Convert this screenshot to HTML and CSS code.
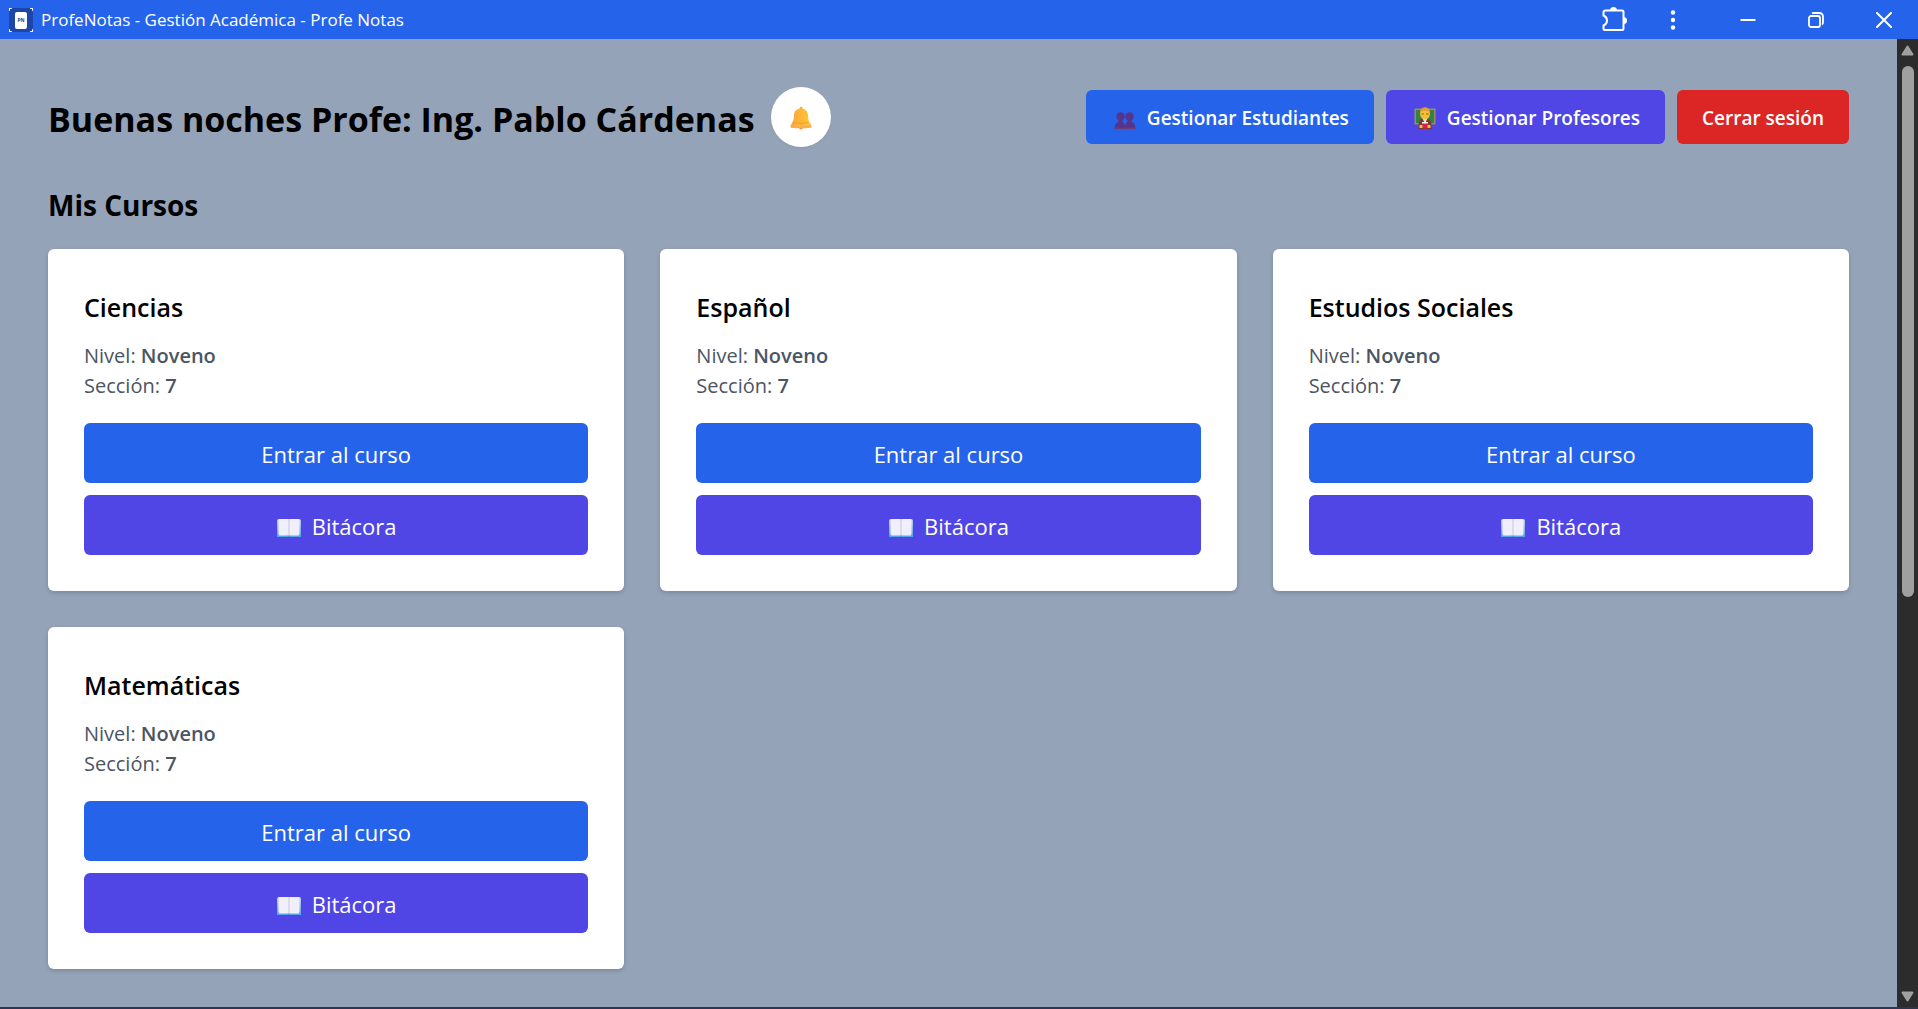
FILE: index.html
```html
<!DOCTYPE html>
<html lang="es">
<head>
<meta charset="utf-8">
<meta name="viewport" content="width=device-width, initial-scale=1">
<title>ProfeNotas - Gestión Académica - Profe Notas</title>
<link rel="stylesheet" href="styles.css">
</head>
<body>
<svg class="defs" width="0" height="0" aria-hidden="true">
  <defs>
    <linearGradient id="book-edge" x1="0" y1="0" x2="0" y2="1">
      <stop offset="0" stop-color="#c9cff5"/><stop offset="1" stop-color="#4b9fe8"/>
    </linearGradient>
    <linearGradient id="bell-body" x1="0" y1="0" x2="1" y2="0">
      <stop offset="0" stop-color="#fba53c"/><stop offset="0.6" stop-color="#fdbb35"/><stop offset="1" stop-color="#fcc93a"/>
    </linearGradient>
    <symbol id="book" viewBox="0 0 26 20">
      <path d="M1 3Q1 1 3 1H23Q25 1 25 3V19H14.500L13 20L11.500 19H1Z" fill="url(#book-edge)"/>
      <path d="M2.500 2Q2.500 1 4 1H11.500Q13 1 13 2.500V17H4Q2.500 17 2.500 16Z" fill="#f0effa"/>
      <path d="M13 2.500Q13 1 14.500 1H22Q23.500 1 23.500 2V16Q23.500 17 22 17H13Z" fill="#f0effa"/>
      <path d="M13 2V18" stroke="#cbc5de" stroke-width="1"/>
      <path d="M3 17.500H11.500L13 18.500L14.500 17.500H23" fill="none" stroke="#a9cdf2" stroke-width="1"/>
      <path d="M12 18.500H14V20H12Z" fill="#2668a5"/>
    </symbol>
  </defs>
</svg>

<header class="titlebar">
  <svg class="app-icon" viewBox="0 0 24 24" aria-hidden="true">
    <rect width="24" height="24" fill="#1e46a8"/>
    <path d="M0 0H3Q0 0 0 3ZM24 0H21Q24 0 24 3ZM0 24V21Q0 24 3 24ZM24 24V21Q24 24 21 24Z" fill="#fff" stroke="#fff"/>
    <rect x="6" y="4" width="12" height="17" rx="2" fill="#fff"/>
    <text x="12" y="14" text-anchor="middle" class="app-icon-text">PN</text>
  </svg>
  <span class="titlebar-text">ProfeNotas - Gestión Académica - Profe Notas</span>
  <div class="titlebar-actions">
    <button class="tb-button tb-wide" type="button" aria-label="Extensiones">
      <svg width="28" height="28" viewBox="0 0 28 28"><path d="M4.500 4.500H21Q22.500 4.500 22.500 6V22.500Q22.500 24 21 24H4Q2.500 24 2.500 22.500V19.500Q6 18 6 14.500Q6 11 2.500 9.500V6.500Q2.500 4.500 4.500 4.500Z" fill="none" stroke="#fff" stroke-width="2"/><path d="M9 4.500A3.500 3.500 0 0 1 16 4.500ZM22.500 11A3.500 3.500 0 0 1 22.500 18Z" fill="#fff"/></svg>
    </button>
    <button class="tb-button tb-menu" type="button" aria-label="Menú">
      <svg width="6" height="22" viewBox="0 0 6 22"><g fill="#fff"><circle cx="3" cy="3.500" r="2.200"/><circle cx="3" cy="11" r="2.200"/><circle cx="3" cy="18.500" r="2.200"/></g></svg>
    </button>
    <button class="tb-button" type="button" aria-label="Minimizar">
      <svg width="16" height="16" viewBox="0 0 16 16"><path d="M.5 8H15.500" stroke="#fff" stroke-width="2"/></svg>
    </button>
    <button class="tb-button" type="button" aria-label="Restaurar">
      <svg width="16" height="16" viewBox="0 0 16 16" fill="none" stroke="#fff" stroke-width="1.800"><rect x="1" y="4" width="11" height="11" rx="2"/><path d="M4 1.500Q4.500 1 6 1H11Q15 1 15 5V10Q15 12 14 12.500"/></svg>
    </button>
    <button class="tb-button" type="button" aria-label="Cerrar">
      <svg width="16" height="16" viewBox="0 0 16 16"><path d="M1 1L15 15M15 1L1 15" stroke="#fff" stroke-width="2" stroke-linecap="round"/></svg>
    </button>
  </div>
</header>

<div class="viewport">
  <main class="page">
    <div class="page-header">
      <div class="greeting">
        <h1>Buenas noches Profe: Ing. Pablo Cárdenas</h1>
        <button class="bell" type="button" aria-label="Notificaciones">
          <svg width="22" height="24" viewBox="0 0 24 26"><circle cx="12" cy="2.500" r="1.700" fill="#f8a53c"/><circle cx="12" cy="23.500" r="2" fill="#f08a4b"/><path d="M12 2.500C7 2.500 4.500 6 4.300 10C4.100 15 3.500 17 1.500 19.500Q.5 21 .8 23Q12 24.500 23.200 23Q23.500 21 22.500 19.500C20.500 17 19.900 15 19.700 10C19.500 6 17 2.500 12 2.500Z" fill="url(#bell-body)"/><path d="M.8 20.500Q12 22.500 23.200 20.500V23.500Q12 25 .8 23.500Z" fill="#f9ad4d"/><path d="M3.500 18Q12 20 20.500 18" stroke="#ef9a2d" fill="none"/></svg>
        </button>
      </div>
      <nav class="actions">
        <button class="btn btn-blue" type="button">
          <svg width="25" height="22" viewBox="-3 -5 25 22" fill="#56348a"><circle cx="6.500" cy="4.500" r="4.200"/><circle cx="15.500" cy="4.500" r="4.200"/><path d="M4.500 8H8.500V10Q11.500 11 11.500 17H.5Q.5 11 4.500 10Z"/><path d="M13.500 8H17.500V10Q21.500 11 21.500 17H11Q11 11 13.500 10Z"/><path d="M1 16.300H21" stroke="#713a74" stroke-width="1.400"/></svg>
          Gestionar Estudiantes
        </button>
        <button class="btn btn-indigo" type="button">
          <svg width="25" height="22" viewBox="-3 0 25 22"><rect x=".5" y="1.500" width="21" height="16" fill="#9b8a68"/><rect x="2" y="3" width="18" height="13" fill="#34823f"/><path d="M4.500 22Q4 12 8 12H14Q18 12 17.500 22Z" fill="#7b3a32"/><path d="M8.500 11H13.500L11 17Z" fill="#f6e6df"/><ellipse cx="11" cy="6.500" rx="5" ry="6" fill="#f6bd36"/><path d="M6 5Q6.500 .5 11 .5Q15.500 .5 16 5Q11 2 6 5Z" fill="#e59b32"/><path d="M7.500 7H10M12 7H14.500" stroke="#a1612b"/><path d="M8 15H14V16.500H8Z" fill="#f8eff2"/><path d="M8.500 17H13.500V21.500H8.500Z" fill="#d62048"/><path d="M5.500 18H8.500V21H5.500ZM13.500 18H16.500V21H13.500Z" fill="#f6bd36"/></svg>
          Gestionar Profesores
        </button>
        <button class="btn btn-red" type="button">Cerrar sesión</button>
      </nav>
    </div>

    <h2>Mis Cursos</h2>
    <div class="courses">
      <article class="card">
        <h3>Ciencias</h3>
        <p>Nivel: <strong>Noveno</strong></p>
        <p>Sección: <strong>7</strong></p>
        <div class="card-actions">
          <button class="card-btn btn-blue" type="button">Entrar al curso</button>
          <button class="card-btn btn-indigo" type="button"><svg class="book"><use href="#book"/></svg>Bitácora</button>
        </div>
      </article>
      <article class="card">
        <h3>Español</h3>
        <p>Nivel: <strong>Noveno</strong></p>
        <p>Sección: <strong>7</strong></p>
        <div class="card-actions">
          <button class="card-btn btn-blue" type="button">Entrar al curso</button>
          <button class="card-btn btn-indigo" type="button"><svg class="book"><use href="#book"/></svg>Bitácora</button>
        </div>
      </article>
      <article class="card">
        <h3>Estudios Sociales</h3>
        <p>Nivel: <strong>Noveno</strong></p>
        <p>Sección: <strong>7</strong></p>
        <div class="card-actions">
          <button class="card-btn btn-blue" type="button">Entrar al curso</button>
          <button class="card-btn btn-indigo" type="button"><svg class="book"><use href="#book"/></svg>Bitácora</button>
        </div>
      </article>
      <article class="card">
        <h3>Matemáticas</h3>
        <p>Nivel: <strong>Noveno</strong></p>
        <p>Sección: <strong>7</strong></p>
        <div class="card-actions">
          <button class="card-btn btn-blue" type="button">Entrar al curso</button>
          <button class="card-btn btn-indigo" type="button"><svg class="book"><use href="#book"/></svg>Bitácora</button>
        </div>
      </article>
    </div>
  </main>
  <div class="scrollbar" aria-hidden="true">
    <svg class="arrow" viewBox="0 0 13 11"><path d="M6.500 1.500L11.500 9.500H1.500Z" fill="#a0a0a0" stroke="#a0a0a0" stroke-width="2" stroke-linejoin="round"/></svg>
    <div class="track"><div class="thumb"></div></div>
    <svg class="arrow" viewBox="0 0 13 11"><path d="M6.500 9.500L11.500 1.500H1.500Z" fill="#a0a0a0" stroke="#a0a0a0" stroke-width="2" stroke-linejoin="round"/></svg>
  </div>
</div>
</body>
</html>
```
FILE: styles.css
```css
*,
*::before,
*::after {
  box-sizing: border-box;
}

body {
  margin: 0;
  height: 100vh;
  display: flex;
  flex-direction: column;
  overflow: hidden;
  background: #2d3350;
  color: #000;
  font-family: "Open Sans", "Noto Sans", sans-serif;
}

h1, h2, h3, p {
  margin: 0;
}

button {
  border: 0;
  margin: 0;
  padding: 0;
  font-family: inherit;
  color: #fff;
  cursor: pointer;
}

svg {
  display: block;
  flex: none;
}

.defs {
  position: absolute;
}

/* Window title bar */
.titlebar {
  flex: none;
  display: flex;
  align-items: center;
  gap: 8px;
  height: 39px;
  padding-left: 9px;
  background: #2563eb;
  color: #fff;
}

.app-icon {
  width: 24px;
  height: 24px;
}

.app-icon-text {
  font-size: 5px;
  font-weight: 700;
  fill: #1e3a8a;
}

.titlebar-text {
  font-size: 17px;
  line-height: 24px;
}

.titlebar-actions {
  display: flex;
  height: 100%;
  margin-left: auto;
}

.tb-button {
  display: flex;
  align-items: center;
  justify-content: center;
  width: 68px;
  background: transparent;
}

.tb-wide {
  width: 60px;
}

.tb-menu {
  width: 56px;
  margin-right: 13px;
}

/* Page area */
.viewport {
  flex: 1;
  min-height: 0;
  display: flex;
  margin-bottom: 2px;
}

.page {
  flex: 1;
  padding: 48px;
  overflow: hidden;
  background: #94a3b8;
}

.page-header {
  display: flex;
  align-items: center;
  justify-content: space-between;
  margin-bottom: 36px;
}

.greeting {
  display: flex;
  align-items: center;
  gap: 16px;
}

h1 {
  padding-top: 4px;
  font-size: 34px;
  line-height: 48px;
  font-weight: 700;
}

.bell {
  display: flex;
  align-items: center;
  justify-content: center;
  width: 60px;
  height: 60px;
  padding-top: 2px;
  border-radius: 50%;
  background: #fff;
  box-shadow: 0 1px 3px rgba(0, 0, 0, 0.06);
}

.actions {
  display: flex;
  gap: 12px;
}

.btn {
  display: flex;
  align-items: center;
  gap: 11px;
  height: 54px;
  padding: 2px 25px 0;
  border-radius: 6px;
  font-size: 19px;
  font-weight: 600;
}

.btn-blue {
  background: #2563eb;
}

.btn-indigo {
  background: #4f46e5;
}

.btn-red {
  background: #dc2626;
}

h2 {
  margin-bottom: 22px;
  font-size: 28px;
  line-height: 44px;
  font-weight: 700;
}

.courses {
  display: grid;
  grid-template-columns: repeat(3, 1fr);
  gap: 36px;
}

.card {
  padding: 36px;
  border-radius: 6px;
  background: #fff;
  box-shadow: 0 2px 4px rgba(0, 0, 0, 0.16);
}

.card h3 {
  margin-bottom: 12px;
  font-size: 25px;
  line-height: 44px;
  font-weight: 600;
}

.card p {
  font-size: 20px;
  line-height: 30px;
  color: #4b5563;
}

.card strong {
  font-weight: 600;
}

.card-actions {
  display: flex;
  flex-direction: column;
  gap: 12px;
  margin-top: 22px;
}

.card-btn {
  display: flex;
  align-items: center;
  justify-content: center;
  gap: 10px;
  height: 60px;
  padding-top: 2px;
  border-radius: 6px;
  font-size: 22px;
}

.book {
  width: 26px;
  height: 20px;
  margin-top: 4px;
}

/* Scroll bar */
.scrollbar {
  flex: none;
  display: flex;
  flex-direction: column;
  align-items: center;
  gap: 10px;
  width: 21px;
  padding: 6px 0 5px;
  background: #2c2c2c;
}

.arrow {
  width: 13px;
  height: 11px;
}

.track {
  flex: 1;
  width: 12px;
}

.thumb {
  height: 58%;
  border-radius: 6px;
  background: #a0a0a0;
}
```
